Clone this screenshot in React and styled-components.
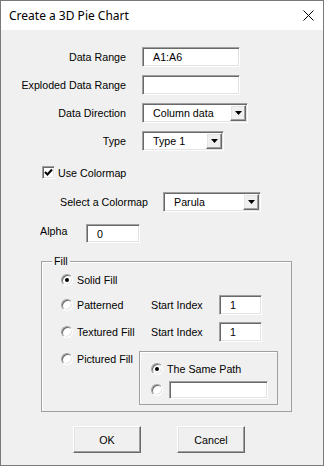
import React from "react";
import styled, { createGlobalStyle } from "styled-components";

const GlobalStyle = createGlobalStyle`
  html, body {
    margin: 0;
    padding: 0;
    background: #fff;
  }

  * {
    box-sizing: border-box;
  }
`;

const sunken = `
  background: #fff;
  border: 1px solid;
  border-color: #a0a0a0 #fff #fff #a0a0a0;
  box-shadow: inset 1px 1px 0 #696969, inset -1px -1px 0 #e3e3e3;
`;

const raised = `
  background: #f0f0f0;
  border: 1px solid;
  border-color: #fff #696969 #696969 #fff;
  box-shadow: inset -1px -1px 0 #a0a0a0, inset 1px 1px 0 #e3e3e3;
`;

const App = () => {
  return (
    <>
      <GlobalStyle />
      <StWindow>
        <StTitleBar>
          <StTitle>Create a 3D Pie Chart</StTitle>
          <svg width="11" height="11" viewBox="0 0 11 11">
            <path d="M0.5 0.5 L10.5 10.5 M10.5 0.5 L0.5 10.5" stroke="#000" strokeWidth="1" fill="none" />
          </svg>
        </StTitleBar>

        <StBody>
          <StFieldStack>
            <StFieldRow>
              <StFieldLabel>Data Range</StFieldLabel>
              <StTextBox $width={98}>A1:A6</StTextBox>
            </StFieldRow>
            <StFieldRow>
              <StFieldLabel>Exploded Data Range</StFieldLabel>
              <StTextBox $width={98} />
            </StFieldRow>
            <StFieldRow>
              <StFieldLabel>Data Direction</StFieldLabel>
              <Dropdown width={106} value="Column data" />
            </StFieldRow>
            <StFieldRow>
              <StFieldLabel>Type</StFieldLabel>
              <Dropdown width={82} value="Type 1" />
            </StFieldRow>
          </StFieldStack>

          <StCheckRow>
            <StCheckBox>
              <svg width="9" height="9" viewBox="0 0 9 9">
                <path d="M1 4 L3.5 6.5 L8 1.5" stroke="#000" strokeWidth="2" fill="none" />
              </svg>
            </StCheckBox>
            <span>Use Colormap</span>
          </StCheckRow>

          <StInlineRow $indent={59} $top={13}>
            <StInlineLabel $width={103}>Select a Colormap</StInlineLabel>
            <Dropdown width={98} value="Parula" />
          </StInlineRow>

          <StInlineRow $indent={39} $top={12} $alignTop>
            <StInlineLabel $width={46} $raise>Alpha</StInlineLabel>
            <StTextBox $width={54} $height={19}>0</StTextBox>
          </StInlineRow>

          <StGroup>
            <StLegend>Fill</StLegend>
            <StOptions>
              <StOptionRow $height={16}>
                <StRadio $checked />
                <StOptionText $width={62}>Solid Fill</StOptionText>
              </StOptionRow>
              <StOptionRow $height={20} $top={7}>
                <StRadio />
                <StOptionText $width={62}>Patterned</StOptionText>
                <StStartLabel>Start Index</StStartLabel>
                <StTextBox $width={43}>1</StTextBox>
              </StOptionRow>
              <StOptionRow $height={20} $top={7}>
                <StRadio />
                <StOptionText $width={62}>Textured Fill</StOptionText>
                <StStartLabel>Start Index</StStartLabel>
                <StTextBox $width={43}>1</StTextBox>
              </StOptionRow>
              <StOptionRow $top={9} $alignTop>
                <StOptionHead>
                  <StRadio />
                  <StOptionText $width={62}>Pictured Fill</StOptionText>
                </StOptionHead>
                <StInnerGroup>
                  <StOptionRow $height={16}>
                    <StRadio $checked />
                    <StOptionText>The Same Path</StOptionText>
                  </StOptionRow>
                  <StOptionRow $height={18} $top={4}>
                    <StRadio />
                    <StTextBox $width={99} $height={18} $gap={6} />
                  </StOptionRow>
                </StInnerGroup>
              </StOptionRow>
            </StOptions>
          </StGroup>

          <StButtonBar>
            <StPushButton>OK</StPushButton>
            <StPushButton>Cancel</StPushButton>
          </StButtonBar>
        </StBody>
      </StWindow>
    </>
  );
};

const Dropdown = ({ width, value }) => (
  <StDropdown $width={width}>
    <StDropValue>{value}</StDropValue>
    <StArrowButton>
      <svg width="7" height="4" viewBox="0 0 7 4">
        <polygon points="0,0 7,0 3.5,4" fill="#000" />
      </svg>
    </StArrowButton>
  </StDropdown>
);

export default App;

const StWindow = styled.div`
  display: flex;
  flex-direction: column;

  width: 324px;
  height: 466px;

  border: 1px solid #7a7a7a;

  font-family: "Liberation Sans", Arial, sans-serif;
  font-size: 10.7px;
  color: #000;
`;

const StTitleBar = styled.div`
  display: flex;
  justify-content: space-between;
  align-items: center;

  height: 29px;
  padding: 0 9px 0 8px;
  background-color: #fff;
`;

const StTitle = styled.span`
  font-family: "Noto Sans", "Open Sans", sans-serif;
  font-size: 12px;
`;

const StBody = styled.div`
  flex: 1;
  display: flex;
  flex-direction: column;

  padding-top: 17px;
  background-color: #f0f0f0;
`;

const StFieldStack = styled.div`
  display: flex;
  flex-direction: column;
  gap: 8px;
`;

const StFieldRow = styled.div`
  display: grid;
  grid-template-columns: 125px auto;
  column-gap: 16px;
  align-items: center;
  justify-items: start;

  height: 20px;
`;

const StFieldLabel = styled.span`
  justify-self: end;
`;

const StTextBox = styled.div`
  ${sunken}
  display: flex;
  align-items: center;
  flex-shrink: 0;

  width: ${(p) => p.$width}px;
  height: ${(p) => p.$height || 20}px;
  margin-left: ${(p) => p.$gap || 0}px;
  padding-left: 10px;
`;

const StDropdown = styled.div`
  ${sunken}
  display: flex;
  align-items: center;
  justify-content: space-between;

  width: ${(p) => p.$width}px;
  height: 20px;
  padding: 1px 1px 1px 10px;
`;

const StDropValue = styled.span``;

const StArrowButton = styled.div`
  ${raised}
  display: flex;
  justify-content: center;
  align-items: center;

  width: 16px;
  height: 16px;
`;

const StCheckRow = styled.label`
  display: flex;
  align-items: center;
  gap: 3px;

  height: 13px;
  margin-top: 15px;
  padding-left: 41px;
`;

const StCheckBox = styled.span`
  ${sunken}
  display: flex;
  justify-content: center;
  align-items: center;

  width: 13px;
  height: 13px;
`;

const StInlineRow = styled.div`
  display: flex;
  align-items: ${(p) => (p.$alignTop ? "flex-start" : "center")};

  margin-top: ${(p) => p.$top}px;
  padding-left: ${(p) => p.$indent}px;
`;

const StInlineLabel = styled.span`
  width: ${(p) => p.$width}px;
  margin-top: ${(p) => (p.$raise ? 1 : 0)}px;
  line-height: 13px;
`;

const StGroup = styled.fieldset`
  width: 251px;
  margin: 11px 0 0 40px;
  padding: 0;

  border: 1px solid #a0a0a0;
  box-shadow: inset 1px 1px 0 #fff;
`;

const StLegend = styled.legend`
  margin-left: 10px;
  padding: 0 2px;

  line-height: 14px;
  background-color: #f0f0f0;
`;

const StOptions = styled.div`
  display: flex;
  flex-direction: column;

  padding: 4px 0 6px 19px;
`;

const StOptionRow = styled.div`
  display: flex;
  align-items: ${(p) => (p.$alignTop ? "flex-start" : "center")};

  height: ${(p) => (p.$height ? `${p.$height}px` : "auto")};
  margin-top: ${(p) => p.$top || 0}px;
`;

const StOptionHead = styled.div`
  display: flex;
  align-items: center;

  height: 16px;
`;

const StRadio = styled.span`
  display: flex;
  justify-content: center;
  align-items: center;
  flex-shrink: 0;

  width: 12px;
  height: 12px;

  border: 1px solid;
  border-color: #a0a0a0 #fff #fff #a0a0a0;
  border-radius: 50%;
  box-shadow: inset 1px 1px 0 #696969, inset -1px -1px 0 #e3e3e3;
  background-color: #fff;

  &::after {
    content: "";
    display: ${(p) => (p.$checked ? "block" : "none")};
    width: 4px;
    height: 4px;
    border-radius: 50%;
    background-color: #000;
  }
`;

const StOptionText = styled.span`
  width: ${(p) => (p.$width ? `${p.$width}px` : "auto")};
  margin-left: 4px;
  white-space: nowrap;
`;

const StStartLabel = styled.span`
  width: 68px;
  margin-left: 12px;
`;

const StInnerGroup = styled.div`
  display: flex;
  flex-direction: column;

  width: 139px;
  height: 54px;
  padding: 9px 0 0 11px;

  border: 1px solid #a0a0a0;
  box-shadow: inset 1px 1px 0 #fff;
`;

const StButtonBar = styled.div`
  display: flex;
  gap: 36px;

  margin-top: 14px;
  padding-left: 72px;
`;

const StPushButton = styled.button`
  ${raised}
  width: 68px;
  height: 27px;
  padding: 0;

  font-family: inherit;
  font-size: 10.7px;
  color: #000;
`;
